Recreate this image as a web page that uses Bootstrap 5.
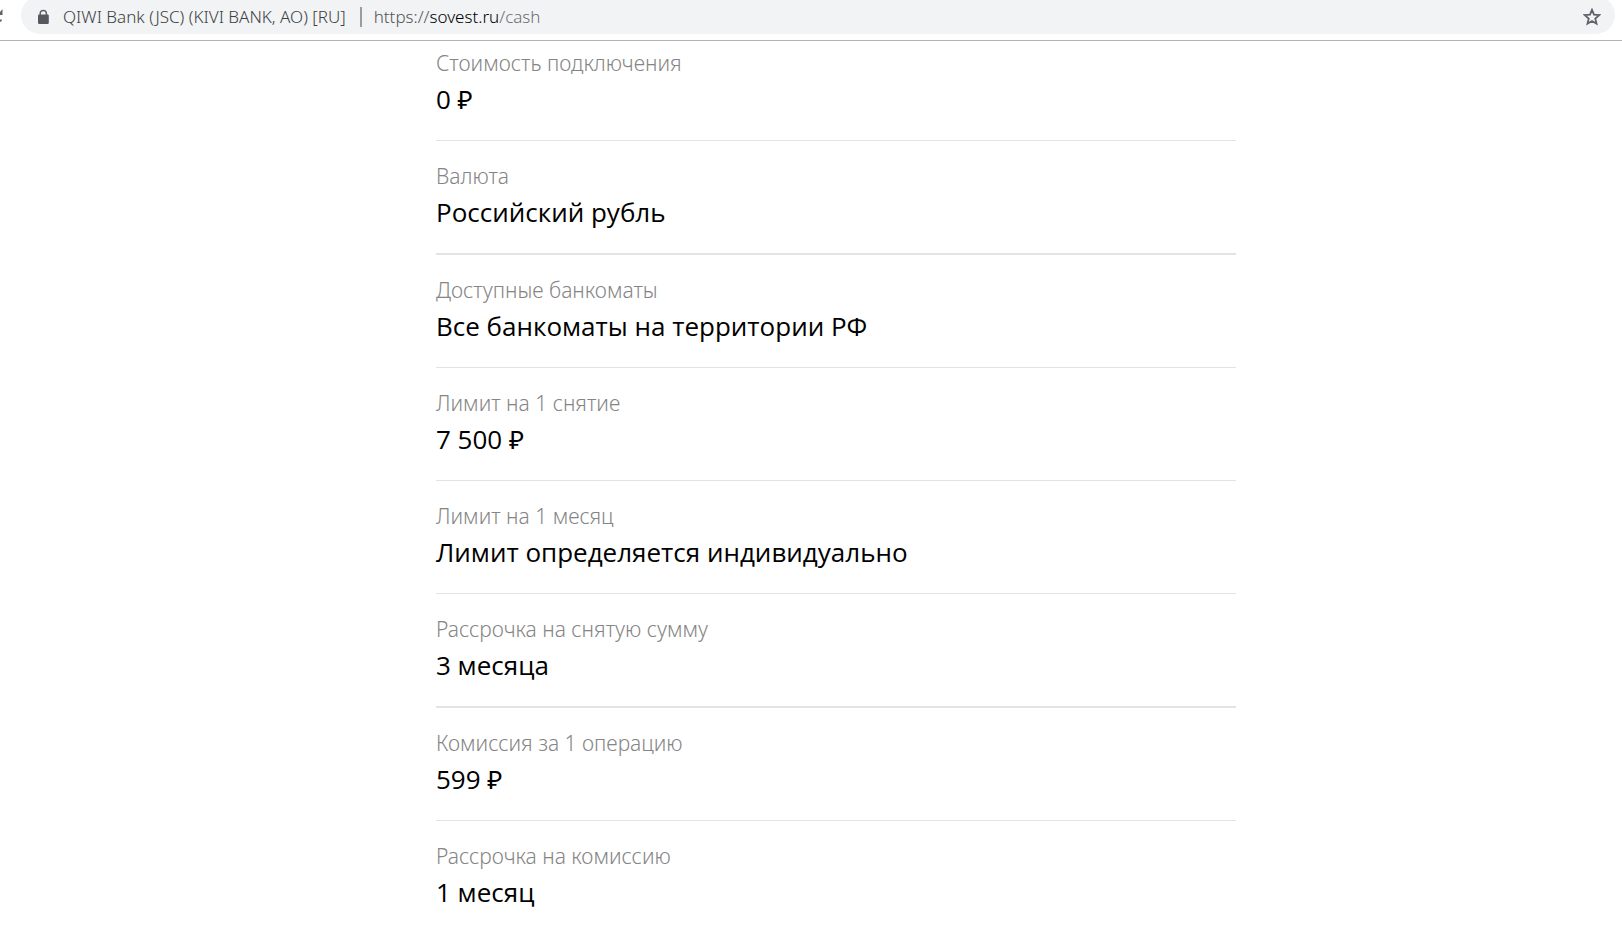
<!DOCTYPE html>
<html lang="ru">
<head>
<meta charset="utf-8">
<meta name="viewport" content="width=device-width, initial-scale=1">
<title>Снятие наличных</title>
<link href="https://cdn.jsdelivr.net/npm/bootstrap@5.3.0/dist/css/bootstrap.min.css" rel="stylesheet">
<style>
  body { background: #fff; color: #000; overflow-x: hidden; font-family: "Open Sans", "Noto Sans", sans-serif; }

  /* Browser toolbar */
  .toolbar { border-bottom: 1px solid #b2b2b2; padding: 0 7px 6px 0; overflow: hidden; }
  .reload { width: 21px; height: 34px; }
  .omnibox {
    height: 38px; margin-top: -4px; padding: 4px 14px 0 14px;
    background: #f1f3f4; border-radius: 19px;
    font: 300 17px/34px "Noto Sans", sans-serif; color: #3c4043;
  }
  .omnibox button { color: #3c4043; line-height: 34px; }
  .site-info { gap: 12px; font-weight: 300; }
  .omnibox .divider { width: 2px; height: 20px; background: #9a9da0; margin: 0 12px 0 14px; }
  .address, .address:hover { color: #505458; }
  .address .host { color: #000; }
  .address .path { color: #6b6f74; }

  /* Tariff list */
  .tariff { max-width: 800px; width: 100%; }
  .tariff-area { padding-left: 50px; }
  .tariff-row { padding: 22px 0 23px; border-bottom: 1px solid #e3e3e3; }
  .tariff-row.strong-rule { border-bottom-width: 2px; }
  .tariff-row:first-child { padding-top: 9px; }
  .tariff-row:last-child { padding-bottom: 0; border-bottom: 0; }
  .tariff dt { font: 300 21px/27px "Noto Sans", sans-serif; color: #858585; }
  .tariff dd { font-size: 26px; line-height: 36px; }
</style>
</head>
<body>
<header class="toolbar d-flex">
  <button type="button" class="reload btn border-0 p-0 flex-shrink-0 d-flex align-items-center" aria-label="Обновить">
    <svg width="3" height="16" viewBox="0 0 3 16" aria-hidden="true"><path d="M2.500 0v6H0V3z" fill="#5f6368"/><path d="M0 12.500 1.500 10.500" stroke="#5f6368" stroke-width="1.500"/></svg>
  </button>
  <div class="omnibox d-flex align-items-center flex-grow-1">
    <button type="button" class="site-info border-0 bg-transparent p-0 d-flex align-items-center text-nowrap">
      <svg width="16" height="16" viewBox="0 0 16 16" aria-hidden="true"><path d="M5.200 7V4.500a3.100 3.100 0 0 1 6.200 0V7" fill="none" stroke="#5f6368" stroke-width="1.500"/><rect x="3" y="5.500" width="10.800" height="9.500" rx="1.200" fill="#55595d"/></svg>
      <span>QIWI Bank (JSC) (KIVI BANK, AO) [RU]</span>
    </button>
    <span class="divider"></span>
    <a class="address text-decoration-none me-auto" href="https://sovest.ru/cash">https://<span class="host">sovest.ru</span><span class="path">/cash</span></a>
    <button type="button" class="border-0 bg-transparent p-0 d-flex" aria-label="Добавить в закладки">
      <svg width="18" height="18" viewBox="0 0 18 18" aria-hidden="true"><path d="M9 1.800 11 6.700l5.300.4-4 3.500 1.200 5.100L9 13l-4.500 2.700 1.200-5.100-4-3.500L7 6.700z" fill="none" stroke="#5f6368" stroke-width="1.800" stroke-linejoin="miter"/></svg>
    </button>
  </div>
</header>

<main class="tariff-area d-flex justify-content-center">
  <dl class="tariff mb-0">
    <div class="tariff-row"><dt>Стоимость подключения</dt><dd class="mt-1 mb-0">0 ₽</dd></div>
    <div class="tariff-row strong-rule"><dt>Валюта</dt><dd class="mt-1 mb-0">Российский рубль</dd></div>
    <div class="tariff-row"><dt>Доступные банкоматы</dt><dd class="mt-1 mb-0">Все банкоматы на территории РФ</dd></div>
    <div class="tariff-row"><dt>Лимит на 1 снятие</dt><dd class="mt-1 mb-0">7 500 ₽</dd></div>
    <div class="tariff-row"><dt>Лимит на 1 месяц</dt><dd class="mt-1 mb-0">Лимит определяется индивидуально</dd></div>
    <div class="tariff-row strong-rule"><dt>Рассрочка на снятую сумму</dt><dd class="mt-1 mb-0">3 месяца</dd></div>
    <div class="tariff-row"><dt>Комиссия за 1 операцию</dt><dd class="mt-1 mb-0">599 ₽</dd></div>
    <div class="tariff-row"><dt>Рассрочка на комиссию</dt><dd class="mt-1 mb-0">1 месяц</dd></div>
  </dl>
</main>
<script src="https://cdn.jsdelivr.net/npm/bootstrap@5.3.0/dist/js/bootstrap.bundle.min.js"></script>
</body>
</html>
